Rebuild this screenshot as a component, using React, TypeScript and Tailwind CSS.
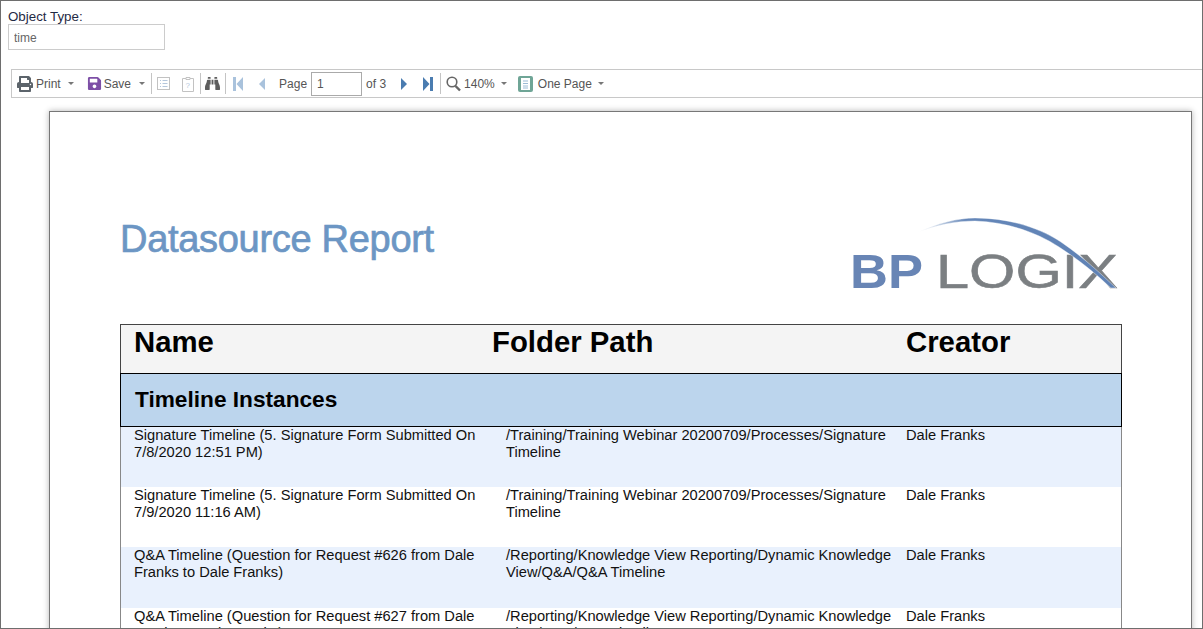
import { FaPrint, FaSave, FaBinoculars } from "react-icons/fa";

const rows = [
  {
    name: "Signature Timeline (5. Signature Form Submitted On 7/8/2020 12:51 PM)",
    path: "/Training/Training Webinar 20200709/Processes/Signature Timeline",
    height: "h-[60px]",
    bg: "bg-[#e9f1fd]",
  },
  {
    name: "Signature Timeline (5. Signature Form Submitted On 7/9/2020 11:16 AM)",
    path: "/Training/Training Webinar 20200709/Processes/Signature Timeline",
    height: "h-[60px]",
    bg: "bg-white",
  },
  {
    name: "Q&A Timeline (Question for Request #626 from Dale Franks to Dale Franks)",
    path: "/Reporting/Knowledge View Reporting/Dynamic Knowledge View/Q&A/Q&A Timeline",
    height: "h-[61px]",
    bg: "bg-[#e9f1fd]",
  },
  {
    name: "Q&A Timeline (Question for Request #627 from Dale Franks to Dale Franks)",
    path: "/Reporting/Knowledge View Reporting/Dynamic Knowledge View/Q&A/Q&A Timeline",
    height: "h-[60px]",
    bg: "bg-white",
  },
];

function Caret({ className }: { className: string }) {
  return <span className={`h-0 w-0 border-x-[3px] border-t-[3px] border-x-transparent border-t-[#777] ${className}`} />;
}

function Sep({ className }: { className: string }) {
  return <span className={`h-[21px] w-px bg-[#c4c4c4] ${className}`} />;
}

function Arrow({ dir, color, className }: { dir: "left" | "right"; color: string; className: string }) {
  const tri = dir === "left" ? "M7 1 L1 7 L7 13 Z" : "M1 1 L7 7 L1 13 Z";
  return (
    <svg width="8" height="14" viewBox="0 0 8 14" className={className} fill={color}>
      <path d={tri} />
    </svg>
  );
}

function EndArrow({ dir, color, className }: { dir: "left" | "right"; color: string; className: string }) {
  const d = dir === "left" ? "M0 0h3v14H0z M10 0 L3.5 7 L10 14 Z" : "M7 0h3v14H7z M0 0 L6.500 7 L0 14 Z";
  return (
    <svg width="10" height="14" viewBox="0 0 10 14" className={className} fill={color}>
      <path d={d} />
    </svg>
  );
}

function Logo() {
  return (
    <svg width="272" height="78" viewBox="0 0 272 78" className="mb-[31px] mr-[2px]">
      <defs>
        <linearGradient id="arc" x1="0" x2="1" y1="0" y2="0">
          <stop offset="0" stopColor="#6f8fbd" stopOpacity="0" />
          <stop offset="0.25" stopColor="#6486b8" />
          <stop offset="1" stopColor="#5f82b5" />
        </linearGradient>
      </defs>
      <text x="2" y="73" fontFamily="'Liberation Sans', sans-serif" fontWeight="700" fontSize="49" textLength="73" lengthAdjust="spacingAndGlyphs" fill="#6885b5">BP</text>
      <text x="88" y="73" fontFamily="'Liberation Sans', sans-serif" fontSize="49" textLength="182" lengthAdjust="spacingAndGlyphs" fill="#7b7f82" stroke="#7b7f82" strokeWidth="0.6">LOGIX</text>
      <path d="M68 18 C90 8 110 3 127 3 C165 3 195 15 213 27 C235 42 252 58 268 73 L263 73 C247 58 230 44 211 32 C190 18 160 7 127 6 C108 6 88 10 68 18 Z" fill="url(#arc)" stroke="#fff" strokeWidth="0.4" />
    </svg>
  );
}

export default function App() {
  return (
    <div className="flex h-[629px] flex-col overflow-hidden border border-[#6e6e6e] bg-white font-['Liberation_Sans',Arial,sans-serif]">
      <div className="h-[68px] shrink-0 pl-[7px] pt-[8px]">
        <div className="text-[13.33px] leading-[15px] text-[#1f2a44]">Object Type:</div>
        <input
          readOnly
          value="time"
          className="block h-[26px] w-[157px] border border-[#ccc] px-[5px] pt-[1px] text-[12px] text-[#666] outline-none"
        />
      </div>

      <div className="ml-[10px] flex h-[29px] shrink-0 items-center border-y border-l border-[#c8c8c8] text-[12px] text-[#555]">
        <FaPrint className="ml-[5px] text-[#5c646b]" size={16} />
        <span className="ml-[3px]">Print</span>
        <Caret className="ml-[7px]" />
        <FaSave className="ml-[13px] text-[#7d4fa6]" size={15} />
        <span className="ml-[2px]">Save</span>
        <Caret className="ml-[8px]" />
        <Sep className="ml-[6px]" />
        <svg width="14" height="14" viewBox="0 0 14 14" className="ml-[5px]" fill="none" stroke="#b5c7dc">
          <rect x="0.5" y="0.5" width="12" height="12" stroke="#c2c2c2" />
          <path d="M3 3.5h1M5.5 3.5h5M3 6.5h1M5.5 6.5h5M3 9.5h1M5.5 9.5h5" />
        </svg>
        <svg width="13" height="16" viewBox="0 0 13 16" className="ml-[11px]" fill="none" stroke="#c2c2c2">
          <path d="M4 2.5H.5v13h11v-13H8M4 3.5V1.5h4v2z" />
          <text x="3.5" y="12" fontSize="8" fill="#b5c7dc" stroke="none" fontFamily="'Liberation Sans', sans-serif">?</text>
        </svg>
        <Sep className="ml-[5px]" />
        <FaBinoculars className="ml-[4px] text-[#5e5e5e]" size={15} />
        <Sep className="ml-[5px]" />
        <EndArrow dir="left" color="#a9c2dc" className="ml-[7px]" />
        <Arrow dir="left" color="#a9c2dc" className="ml-[15px]" />
        <span className="ml-[13px]">Page</span>
        <input
          readOnly
          value="1"
          className="ml-[4px] h-[24px] w-[51px] border border-[#aaa] px-[5px] text-[12px] text-[#555] outline-none"
        />
        <span className="ml-[4px]">of 3</span>
        <Arrow dir="right" color="#4a7cb0" className="ml-[14px]" />
        <EndArrow dir="right" color="#4a7cb0" className="ml-[15px]" />
        <Sep className="ml-[7px]" />
        <svg width="15" height="16" viewBox="0 0 15 16" className="ml-[5px]" fill="none" stroke="#666">
          <circle cx="6" cy="6" r="4.8" strokeWidth="1.6" />
          <path d="M9.500 10 L14 14.500" strokeWidth="2.4" />
        </svg>
        <span className="ml-[3px]">140%</span>
        <Caret className="ml-[6px]" />
        <svg width="15" height="16" viewBox="0 0 15 16" className="ml-[11px]">
          <rect width="15" height="16" rx="2" fill="#6fa596" />
          <rect x="3" y="2" width="9" height="12" fill="#fff" />
          <path d="M5 5h5M5 7.500h5M5 10h5M5 12h5" stroke="#9dbbd6" />
        </svg>
        <span className="ml-[5px]">One Page</span>
        <Caret className="ml-[6px]" />
      </div>

      <div className="ml-[48px] mr-[10px] mt-[13px] grow border-x border-t border-[#777] bg-white pl-[70px] pr-[69px] shadow-[0_0_6px_rgba(0,0,0,0.3)]">
        <div className="flex h-[212px] items-end justify-between">
          <h1 className="mb-[64px] text-[38px] leading-[42px] tracking-[-0.3px] text-[#6c96c4] [-webkit-text-stroke:0.7px_#6c96c4]">Datasource Report</h1>
          <Logo />
        </div>

        <div>
          <div className="flex h-[49px] border border-b-0 border-[#444] bg-[#f4f4f4] text-[29.33px] font-bold leading-[33px] text-black">
            <span className="ml-[13px] w-[358px]">Name</span>
            <span className="w-[414px]">Folder Path</span>
            <span>Creator</span>
          </div>
          <div className="flex h-[54px] items-center border border-black bg-[#bcd5ed] pb-[2px] pl-[14px] text-[22.67px] font-bold text-black">
            Timeline Instances
          </div>
          {rows.map((row) => (
            <div key={row.name} className={`flex border-x border-[#888] text-[14.67px] leading-[17px] text-[#111] ${row.height} ${row.bg}`}>
              <div className="w-[385px] pl-[13px] pr-[10px]">{row.name}</div>
              <div className="w-[400px] pr-[8px]">{row.path}</div>
              <div>Dale Franks</div>
            </div>
          ))}
        </div>
      </div>
    </div>
  );
}
